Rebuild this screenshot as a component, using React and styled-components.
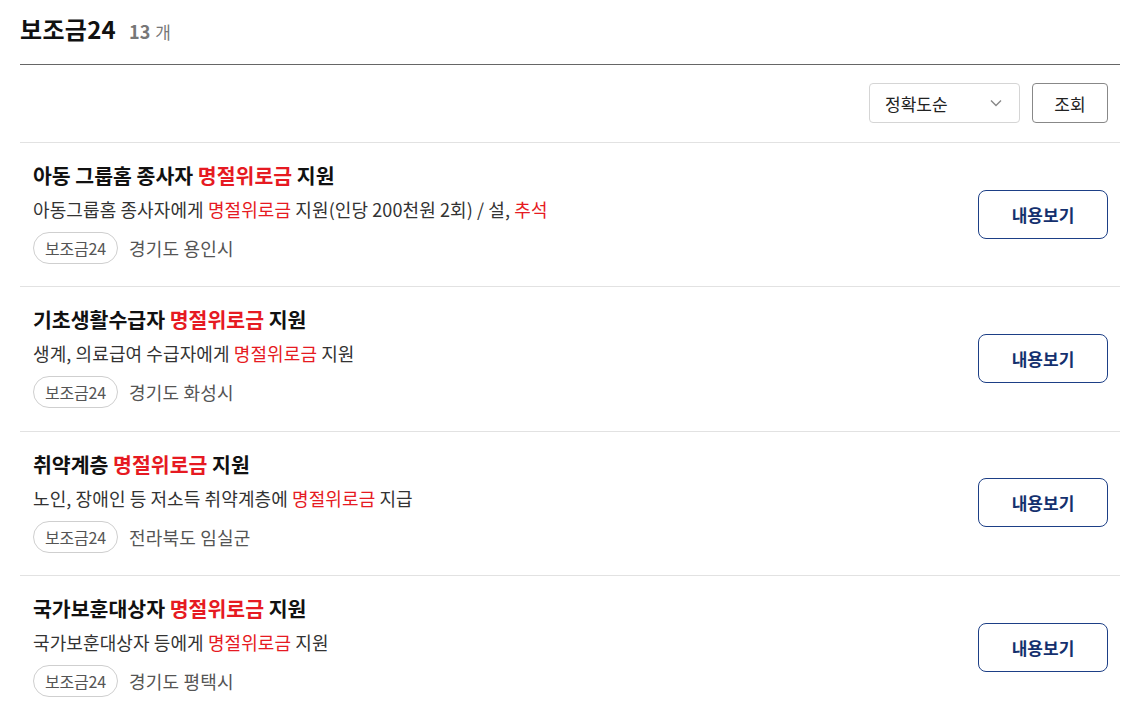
import React from 'react';
import styled, { createGlobalStyle } from 'styled-components';

const GlobalStyle = createGlobalStyle`
  body {
    margin: 0;
    background: #fff;
    font-family: 'Noto Sans CJK KR', 'Noto Sans', sans-serif;
    color: #222;
  }
`

const Page = styled.div`
  padding: 0 3px 0 20px;
`

const Head = styled.div`
  display: flex;
  align-items: baseline;
  gap: 13px;
  padding-top: 11px;
  height: 65px;
  box-sizing: border-box;
  border-bottom: 1px solid #666;
`

const Title = styled.h2`
  margin: 0;
  font-size: 24px;
  font-weight: 700;
  color: #111;
  letter-spacing: 0.3px;
  line-height: 36px;
`

const Count = styled.span`
  font-size: 18px;
  font-weight: 700;
  color: #777;
  & small {
    font-size: 17px;
    font-weight: 400;
    margin-left: 5px;
  }
`

const Toolbar = styled.div`
  display: flex;
  justify-content: flex-end;
  gap: 12px;
  padding: 18px 12px 19px 0;
  border-bottom: 1px solid #e2e2e2;
`

const Select = styled.div`
  width: 151px;
  height: 40px;
  box-sizing: border-box;
  border: 1px solid #d5d5d5;
  border-radius: 4px;
  display: flex;
  align-items: center;
  justify-content: space-between;
  padding: 0 16px 0 15px;
  font-size: 17px;
  color: #222;
`

const SmallButton = styled.button`
  width: 76px;
  height: 40px;
  border: 1px solid #888;
  border-radius: 4px;
  background: #fff;
  font-family: inherit;
  font-size: 17px;
  color: #222;
`

const Item = styled.div`
  display: flex;
  align-items: flex-start;
  justify-content: space-between;
  height: 144.4px;
  box-sizing: border-box;
  padding: 18px 12px 0 13px;
  border-bottom: 1px solid #e2e2e2;
`

const Info = styled.div`
  display: flex;
  flex-direction: column;
`

const ItemTitle = styled.div`
  font-size: 20.5px;
  font-weight: 700;
  color: #111;
  line-height: 28px;
`

const Desc = styled.div`
  font-size: 18px;
  color: #333;
  line-height: 26px;
  margin-top: 7px;
  letter-spacing: 0.1px;
`

const Red = styled.span`
  color: #e61a22;
`

const Meta = styled.div`
  display: flex;
  align-items: center;
  gap: 11px;
  margin-top: 10px;
`

const Pill = styled.span`
  height: 32px;
  box-sizing: border-box;
  padding: 0 11px;
  border: 1px solid #cfcfcf;
  border-radius: 16px;
  display: inline-flex;
  align-items: center;
  font-size: 16px;
  color: #555;
  letter-spacing: -0.2px;
`

const Region = styled.span`
  font-size: 18px;
  color: #555;
  letter-spacing: 0.2px;
`

const ViewButton = styled.button`
  align-self: center;
  margin-top: -19px;
  width: 130px;
  height: 49px;
  border: 1px solid #1d3f86;
  border-radius: 8px;
  background: #fff;
  font-family: inherit;
  font-size: 17px;
  font-weight: 700;
  color: #14306e;
`

const items = [
  {
    title: ['아동 그룹홈 종사자 ', '명절위로금', ' 지원'],
    desc: <>아동그룹홈 종사자에게 <Red>명절위로금</Red> 지원(인당 200천원 2회) / 설, <Red>추석</Red></>,
    region: '경기도 용인시',
  },
  {
    title: ['기초생활수급자 ', '명절위로금', ' 지원'],
    desc: <>생계, 의료급여 수급자에게 <Red>명절위로금</Red> 지원</>,
    region: '경기도 화성시',
  },
  {
    title: ['취약계층 ', '명절위로금', ' 지원'],
    desc: <>노인, 장애인 등 저소득 취약계층에 <Red>명절위로금</Red> 지급</>,
    region: '전라북도 임실군',
  },
  {
    title: ['국가보훈대상자 ', '명절위로금', ' 지원'],
    desc: <>국가보훈대상자 등에게 <Red>명절위로금</Red> 지원</>,
    region: '경기도 평택시',
  },
]

const App = () => {
  return <Page>
    <GlobalStyle />
    <Head>
      <Title>보조금24</Title>
      <Count>13<small>개</small></Count>
    </Head>
    <Toolbar>
      <Select>
        정확도순
        <svg width="14" height="14" viewBox="0 0 14 14">
          <path d="M2 4.5 L7 9.5 L12 4.5" fill="none" stroke="#888" strokeWidth="1.4" />
        </svg>
      </Select>
      <SmallButton>조회</SmallButton>
    </Toolbar>
    {items.map((it, i) => (
      <Item key={i}>
        <Info>
          <ItemTitle>{it.title[0]}<Red>{it.title[1]}</Red>{it.title[2]}</ItemTitle>
          <Desc>{it.desc}</Desc>
          <Meta>
            <Pill>보조금24</Pill>
            <Region>{it.region}</Region>
          </Meta>
        </Info>
        <ViewButton>내용보기</ViewButton>
      </Item>
    ))}
  </Page>
}

export default App
